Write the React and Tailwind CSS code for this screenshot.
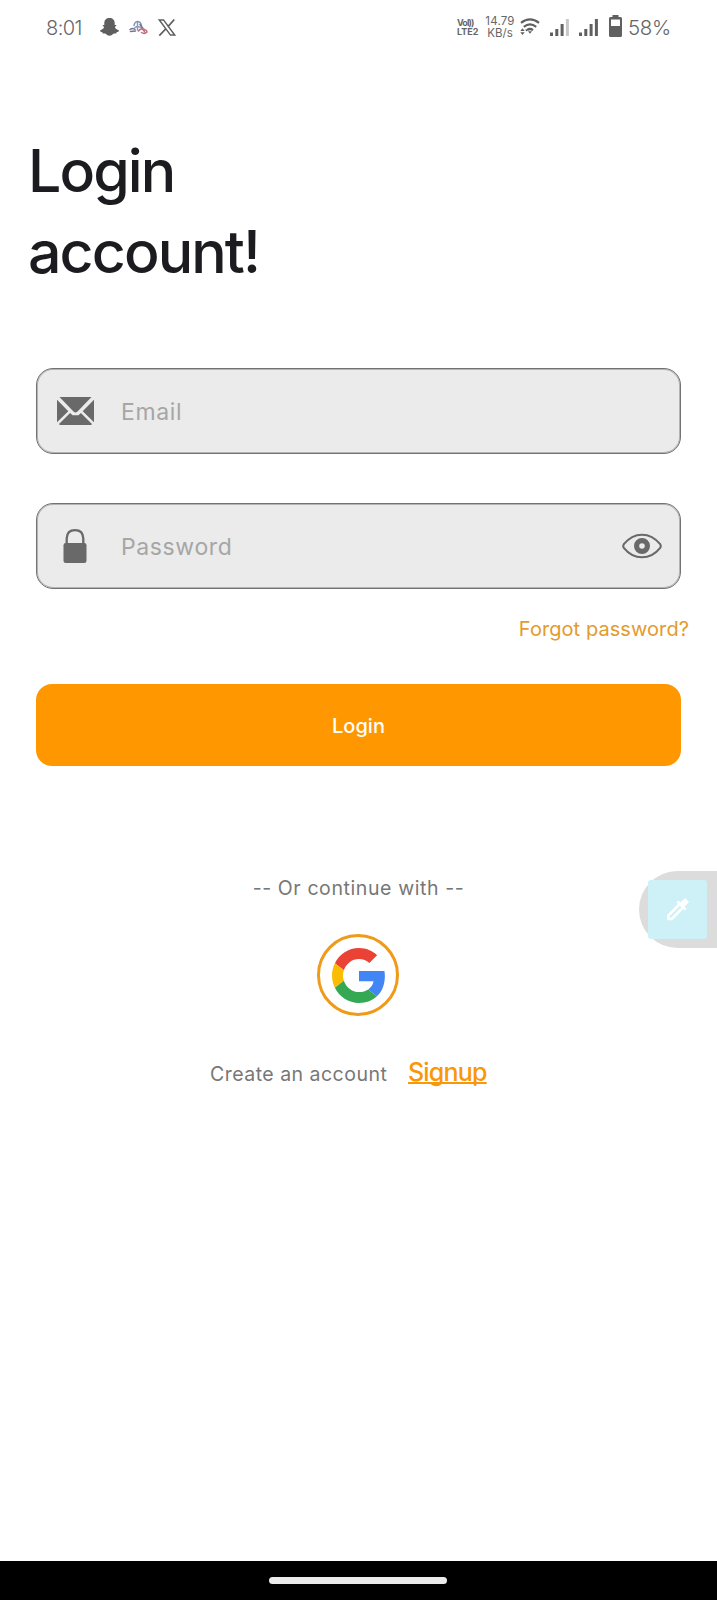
import React from "react";

function StatusBar() {
  return (
    <header className="flex h-[54px] items-center pl-[46px] text-[#666]">
      <span className="w-[36px] whitespace-nowrap pt-[2px] text-[20px] leading-none font-light tracking-[-0.6px]">8:01</span>
      <svg className="ml-[18px] h-[18px] w-[19px] shrink-0" viewBox="0 0 19 18" fill="#5f5f5f">
        <path d="M9.5 0C6.300 0 4.300 2 4.300 5v2.100c-.7.1-1.500-.5-1.600.3 0 .8 1.400.8 1.400 1.700-.5 1.700-2 2.800-4.100 3.300 0 1.400 1.300 1.500 2.400 1.800.3.500 0 1.200.8 1.300 1 0 1.900-.2 2.700.5.900.7 2 1.800 3.600 1.800s2.700-1.100 3.600-1.800c.8-.7 1.700-.5 2.700-.5.8-.1.500-.8.8-1.300 1.100-.3 2.400-.4 2.400-1.800-2.100-.5-3.600-1.600-4.100-3.300 0-.9 1.400-.9 1.400-1.700-.1-.8-.9-.2-1.600-.3V5c0-3-2-5-5.200-5z" />
      </svg>
      <svg className="ml-[10px] h-[15px] w-[19px] shrink-0" viewBox="0 0 19 15" fill="none" strokeLinecap="round">
        <path d="M5 5.500Q6 1 9 1.500Q12 2 12.500 6M6 7.500Q9 5.500 12.500 8M8.500 2v8" stroke="#8d97b8" strokeWidth="1.500" />
        <path d="M1 9.500Q3.500 7.800 6 9.300M1.500 11.500L6.500 11M11 4.500l3 4" stroke="#6d7898" strokeWidth="1.500" />
        <path d="M9.500 11Q11 8.500 13.500 9Q17.500 9.500 18 12Q15.500 14.500 12.500 12.500M13 8.500l2.500 3" stroke="#bd6f7a" strokeWidth="1.500" />
      </svg>
      <svg className="ml-[10px] h-[17px] w-[18px] shrink-0" viewBox="0 0 18 17" fill="none" stroke="#606060">
        <path d="M1.300.9H5.500L16.700 16.100H12.500Z" strokeWidth="1.500" />
        <path d="M16.300.5L10 7.600M7.800 9.900L1.300 16.600" strokeWidth="1.700" />
      </svg>
      <div className="ml-[281px] flex w-[22px] flex-col text-[9px] leading-[9px] font-bold">
        <span className="flex h-[9px] tracking-[-0.8px]">Vo<span className="tracking-[-1.1px]">l))</span></span>
        <span className="whitespace-nowrap">LTE2</span>
      </div>
      <div className="ml-[6px] flex w-[30px] flex-col items-center whitespace-nowrap text-[11.500px] leading-[12px]">
        <span className="tracking-[0.2px]">14.79</span>
        <span>KB/s</span>
      </div>
      <svg className="ml-[5px] h-[18px] w-[20px] shrink-0" viewBox="0 0 20 18" fill="none" stroke="#606060" strokeWidth="2.200">
        <path d="M1 4.800Q10-2.200 19 4.800M3.800 8.800Q10 4 16.200 8.800" />
        <path d="M7 12.200Q10 9.800 13 12.200" />
        <path d="M8 13.200h4l-2 2.600z" fill="#606060" stroke="none" />
        <path d="M2.500 10.300l2.200 2.700H.3zM2.500 17l2.200-2.700H.3zM5 11.500h3l-1.500 2z" fill="#606060" stroke="none" />
      </svg>
      <svg className="ml-[10px] h-[17px] w-[19px] shrink-0" viewBox="0 0 19 17" fill="#606060">
        <path d="M0 13.500h3V17H0zM5.300 10h3v7h-3zM10.600 5h3v12h-3z" />
        <path d="M15.900 0h3v17h-3z" fill="#c8c8c8" />
      </svg>
      <svg className="ml-[10px] h-[17px] w-[19px] shrink-0" viewBox="0 0 19 17" fill="#606060">
        <path d="M0 13.500h3V17H0zM5.300 10h3v7h-3zM10.600 5h3v12h-3zM15.900 0h3v17h-3z" />
      </svg>
      <svg className="ml-[11px] h-[22px] w-[13px] shrink-0 -translate-y-px" viewBox="0 0 13 22" fill="#606060">
        <path fillRule="evenodd" d="M3.500 0h6v2h2Q13 2 13 3.500v17Q13 22 11.500 22h-10Q0 22 0 20.500v-17Q0 2 1.500 2h2zM2 4.500v6.500h9V4.500z" />
      </svg>
      <span className="ml-[6px] whitespace-nowrap pt-[2px] text-[20.500px] leading-none font-light tracking-[-0.400px]">58%</span>
    </header>
  );
}

function MailIcon() {
  return (
    <svg className="h-[28px] w-[37px]" viewBox="0 0 37 28" fill="#696969">
      <path d="M2.500 0H34.500L20.500 14.600Q18.500 16.400 16.500 14.600Z" />
      <path d="M0 2.800L11.300 14.300L0 25.200ZM37 2.800L25.700 14.300L37 25.200Z" />
      <path d="M13.100 16L15.600 18.300H21.400L23.900 16L35 27Q34.700 28 33.500 28H3.500Q2.300 28 2 27Z" />
    </svg>
  );
}

function LockIcon() {
  return (
    <svg className="h-[34px] w-[24px]" viewBox="0 0 24 34">
      <path d="M3.700 15V9.500Q4 1.200 12 1.200T20.300 9.500V15" fill="none" stroke="#696969" strokeWidth="2.300" />
      <rect x=".5" y="14" width="23" height="20" rx="2.300" fill="#696969" />
    </svg>
  );
}

function EyeIcon() {
  return (
    <svg className="h-[26px] w-[40px]" viewBox="0 0 40 26" fill="none" stroke="#696969">
      <path d="M1.800 11.200Q9.500 1.700 20 1.700T38.200 11.200Q39.300 13 38.200 14.800Q30.500 24.300 20 24.300T1.800 14.800Q.7 13 1.800 11.200Z" strokeWidth="2.100" />
      <circle cx="20" cy="13" r="5.400" strokeWidth="5.200" />
    </svg>
  );
}

function GoogleIcon() {
  return (
    <svg className="h-[55px] w-[54px] shrink-0" viewBox="0 0 48 48" preserveAspectRatio="none">
      <path fill="#EA4335" d="M24 9.500c3.540 0 6.710 1.220 9.210 3.600l6.850-6.850C35.900 2.380 30.470 0 24 0 14.620 0 6.510 5.380 2.560 13.220l7.980 6.190C12.430 13.720 17.740 9.500 24 9.500z" />
      <path fill="#4285F4" d="M46.980 24.550c0-1.570-.15-3.090-.38-4.550H24v9.020h12.940c-.58 2.960-2.260 5.480-4.780 7.180l7.730 6c4.510-4.180 7.090-10.360 7.090-17.650z" />
      <path fill="#FBBC05" d="M10.530 28.590c-.48-1.450-.76-2.990-.76-4.590s.27-3.140.76-4.590l-7.980-6.190C.92 16.460 0 20.120 0 24c0 3.880.92 7.540 2.560 10.780l7.970-6.190z" />
      <path fill="#34A853" d="M24 48c6.480 0 11.930-2.130 15.890-5.810l-7.730-6c-2.150 1.450-4.920 2.300-8.160 2.300-6.260 0-11.570-4.220-13.470-9.910l-7.980 6.190C6.510 42.620 14.620 48 24 48z" />
    </svg>
  );
}

function Field({ icon, label, type, children }) {
  return (
    <label className="flex h-[86px] items-center rounded-[17px] border border-[#737373] bg-[#ebebeb] shadow-[inset_0_0_0_1px_#b4b4b4]">
      <span className="flex w-[76px] justify-center">{icon}</span>
      <input
        type={type}
        placeholder={label}
        className="ml-[8px] min-w-0 flex-1 bg-transparent pt-[2px] text-[23px] tracking-[0.620px] outline-none placeholder:text-[#a6a6a6]"
      />
      {children}
    </label>
  );
}

export default function App() {
  return (
    <div className="relative flex h-[1600px] w-[717px] flex-col overflow-hidden bg-white font-['Inter',sans-serif]">
      <StatusBar />
      <h1 className="mt-[76px] ml-[28px] text-[59px] leading-[81px] font-medium tracking-[-1.900px] text-[#1c1b1f]">
        Login
        <br />
        account!
      </h1>
      <form className="mx-[36px] mt-[76px] flex flex-col">
        <Field icon={<MailIcon />} label="Email" type="text" />
        <div className="h-[49px]" />
        <Field icon={<LockIcon />} label="Password" type="password">
          <button type="button" className="mr-[18px]">
            <EyeIcon />
          </button>
        </Field>
        <a className="mt-[25px] mr-[-8px] self-end text-[20px] leading-[30px] tracking-[0.070px] text-[#e39b2d]">Forgot password?</a>
        <button type="button" className="mt-[40px] h-[82px] rounded-[16px] bg-[#ff9800] pt-[2px] text-[20px] font-medium text-white">
          Login
        </button>
      </form>
      <p className="mt-[107px] text-center text-[19.500px] leading-[30px] tracking-[0.600px] text-[#777]">-- Or continue with --</p>
      <button type="button" className="mt-[31px] mr-px flex size-[82px] items-center justify-center self-center rounded-full border-[3px] border-[#f09a1a] pl-[2px]">
        <GoogleIcon />
      </button>
      <div className="mt-[41px] ml-[210px] flex items-baseline leading-[30px]">
        <span className="w-[198px] text-[19.500px] tracking-[0.480px] text-[#777]">Create an account</span>
        <a className="text-[25px] font-medium tracking-[-0.800px] text-[#f99807] underline decoration-[2px] underline-offset-[1px] [text-decoration-skip-ink:none]">Signup</a>
      </div>
      <div className="absolute top-[871px] right-0 flex h-[77px] w-[78px] items-center rounded-l-full bg-[#dcdcdc] pl-[9px]">
        <div className="flex size-[59px] items-center justify-center rounded-[3px] bg-[#cdf1f7] pr-px pb-px">
          <svg className="h-[23px] w-[23px]" viewBox="0 0 22 22">
            <path d="M12.500 6.500L2.200 16.800V20H5.400L15.700 9.700" fill="none" stroke="white" strokeWidth="2.500" strokeLinejoin="round" />
            <path d="M10 4l1.700-1.700 2.100 2.100L17.500.7q.8-.8 1.600 0l2.300 2.300q.8.800 0 1.600l-3.700 3.700 2.100 2.100L18 12z" fill="white" />
          </svg>
        </div>
      </div>
      <footer className="mt-auto flex h-[39px] shrink-0 items-center justify-center bg-black pr-px">
        <div className="h-[7px] w-[178px] rounded-full bg-[#ebebeb]" />
      </footer>
    </div>
  );
}
